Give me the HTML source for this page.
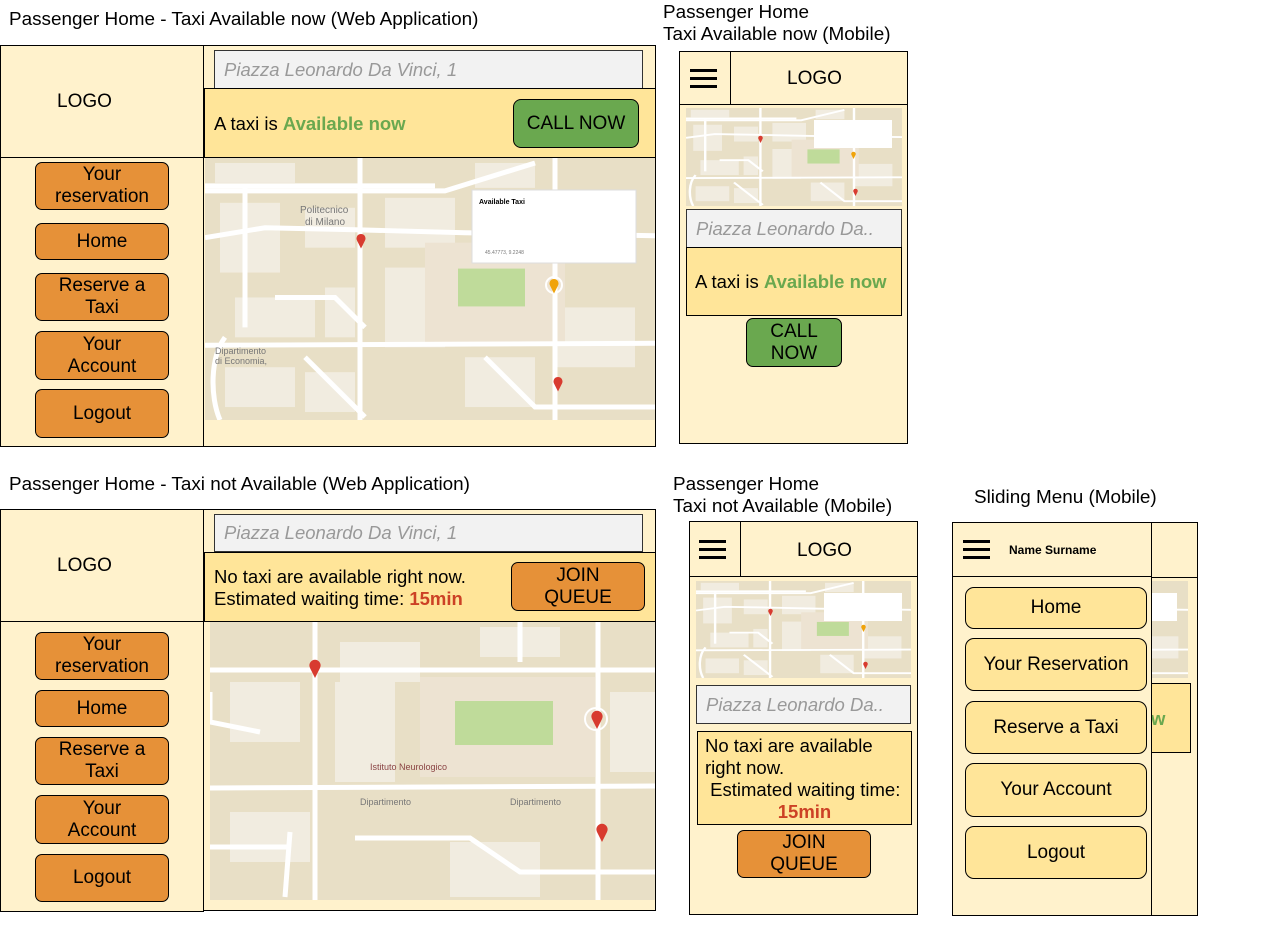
<!DOCTYPE html>
<html><head><meta charset="utf-8"><style>
*{box-sizing:border-box;margin:0;padding:0}
body{width:1272px;height:931px;background:#fff;position:relative;font-family:"Liberation Sans",Arial,sans-serif;color:#000;overflow:hidden}
.a{position:absolute}
.t{font-size:18.9px;line-height:22px;white-space:nowrap}
.bx{position:absolute;border:1px solid #000;background:#fff2cc}
.srch{position:absolute;background:#f2f2f2;border:1px solid #333;color:#999;font-style:italic;font-size:18.5px;padding-left:9px;display:flex;align-items:center}
.yel{position:absolute;background:#ffe599;border:1px solid #000}
.btn{position:absolute;border:1px solid #000;border-radius:7px;background:#e69138;display:flex;align-items:center;justify-content:center;text-align:center;font-size:19px;line-height:22px}
.g{color:#6aa84f;font-weight:bold}
.r{color:#cc4125;font-weight:bold}
.mb{position:absolute;border:1px solid #000;border-radius:9px;background:#ffe599;display:flex;align-items:center;justify-content:center;font-size:19px}
.hb{position:absolute;width:27px;height:3px;background:#000}
svg.m{position:absolute;display:block}
</style></head><body>
<svg width="0" height="0" style="position:absolute">
<defs>
<symbol id="map1" viewBox="0 0 450 263" preserveAspectRatio="none">
<rect width="450" height="263" fill="#e8dfc6"/>
<g fill="#f1ece0"><rect x="15" y="45" width="60" height="70"/><rect x="100" y="50" width="50" height="40"/><rect x="180" y="40" width="70" height="50"/><rect x="30" y="140" width="80" height="40"/><rect x="120" y="130" width="30" height="50"/><rect x="180" y="110" width="60" height="80"/><rect x="260" y="200" width="70" height="50"/><rect x="350" y="150" width="80" height="60"/><rect x="20" y="210" width="70" height="40"/><rect x="100" y="215" width="50" height="40"/><rect x="10" y="5" width="80" height="20"/><rect x="270" y="5" width="60" height="25"/></g>
<rect x="220" y="85" width="140" height="100" fill="#ede3d2"/>
<rect x="253" y="111" width="67" height="38" fill="#bfdb9a"/>
<g stroke="#fff" stroke-width="5" fill="none">
<path d="M0 33 L240 33 L330 5"/><path d="M0 28 L230 28"/><path d="M155 0 L155 263"/><path d="M0 188 L450 186"/><path d="M350 0 L350 263"/><path d="M0 80 L60 70 L150 72 L260 75 L450 78"/><path d="M40 30 L40 170"/><path d="M20 180 C5 200 5 240 15 263"/><path d="M100 200 L160 260"/><path d="M280 200 L330 250 L450 250"/><path d="M70 140 L130 140 L160 170"/></g>
</symbol>
<symbol id="pin" viewBox="0 0 10 16"><path d="M5 16 L1 8 A4.5 4.5 0 1 1 9 8 Z" fill="#d83b2f"/></symbol>
<symbol id="pino" viewBox="0 0 10 16"><path d="M5 16 L1 8 A4.5 4.5 0 1 1 9 8 Z" fill="#f0a30a"/></symbol>
</defs></svg>

<div class="a t" style="left:9px;top:9px">Passenger Home - Taxi Available now (Web Application)</div>
<div class="a t" style="left:663px;top:2px">Passenger Home<br>Taxi Available now (Mobile)</div>
<div class="a t" style="left:9px;top:474px">Passenger Home - Taxi not Available (Web Application)</div>
<div class="a t" style="left:673px;top:474px">Passenger Home<br>Taxi not Available (Mobile)</div>
<div class="a t" style="left:974px;top:487px">Sliding Menu (Mobile)</div>

<!-- WEB 1 -->
<div class="bx" style="left:203px;top:45px;width:453px;height:402px"></div>
<div class="bx" style="left:0;top:45px;width:204px;height:113px"></div>
<div class="a" style="left:57px;top:91px;font-size:19px">LOGO</div>
<div class="bx" style="left:0;top:157px;width:204px;height:290px"></div>
<div class="srch" style="left:214px;top:50px;width:429px;height:39px">Piazza Leonardo Da Vinci, 1</div>
<div class="yel" style="left:204px;top:88px;width:452px;height:70px"></div>
<div class="a" style="left:214px;top:113px;font-size:18.5px">A taxi is <span class="g">Available now</span></div>
<div class="btn" style="left:513px;top:99px;width:126px;height:49px;background:#6aa84f;border-radius:8px">CALL NOW</div>
<svg class="m" style="left:205px;top:158px" width="450" height="262"><use href="#map1" width="450" height="262"/>
<rect x="267" y="32" width="164" height="73" fill="#fff" stroke="#ddd"/><text x="274" y="46" font-size="7" font-weight="bold" font-family="Liberation Sans">Available Taxi</text><text x="280" y="96" font-size="5" fill="#777" font-family="Liberation Sans">45.47773, 9.2248</text>
<use href="#pin" x="151" y="74" width="10" height="17"/><circle cx="349" cy="127" r="8" fill="none" stroke="#fff" stroke-width="2"/><use href="#pino" x="344" y="119" width="10" height="17"/><use href="#pin" x="348" y="217" width="10" height="17"/>
<text x="95" y="55" font-size="10" fill="#777" font-family="Liberation Sans">Politecnico</text><text x="100" y="67" font-size="10" fill="#777" font-family="Liberation Sans">di Milano</text>
<text x="10" y="196" font-size="9" fill="#777" font-family="Liberation Sans">Dipartimento</text><text x="10" y="206" font-size="9" fill="#777" font-family="Liberation Sans">di Economia,</text></svg>
<div class="btn" style="left:35px;top:162px;width:134px;height:48px">Your<br>reservation</div>
<div class="btn" style="left:35px;top:223px;width:134px;height:37px">Home</div>
<div class="btn" style="left:35px;top:273px;width:134px;height:48px">Reserve a<br>Taxi</div>
<div class="btn" style="left:35px;top:331px;width:134px;height:49px">Your<br>Account</div>
<div class="btn" style="left:35px;top:389px;width:134px;height:49px">Logout</div>

<!-- WEB 2 -->
<div class="bx" style="left:203px;top:509px;width:453px;height:402px"></div>
<div class="bx" style="left:0;top:509px;width:204px;height:113px"></div>
<div class="a" style="left:57px;top:555px;font-size:19px">LOGO</div>
<div class="bx" style="left:0;top:621px;width:204px;height:291px"></div>
<div class="srch" style="left:214px;top:514px;width:429px;height:38px">Piazza Leonardo Da Vinci, 1</div>
<div class="yel" style="left:204px;top:552px;width:452px;height:70px"></div>
<div class="a" style="left:214px;top:566px;font-size:18.5px;line-height:22px">No taxi are available right now.<br>Estimated waiting time: <span class="r">15min</span></div>
<div class="btn" style="left:511px;top:562px;width:134px;height:49px">JOIN<br>QUEUE</div>
<svg class="m" style="left:210px;top:622px" width="445" height="278">
<rect width="445" height="278" fill="#e8dfc6"/>
<g fill="#f1ece0"><rect x="20" y="60" width="70" height="60"/><rect x="130" y="20" width="80" height="40"/><rect x="125" y="60" width="60" height="100"/><rect x="400" y="70" width="45" height="80"/><rect x="20" y="190" width="80" height="50"/><rect x="240" y="220" width="90" height="55"/><rect x="270" y="5" width="80" height="30"/></g>
<rect x="210" y="55" width="175" height="100" fill="#ede3d2"/>
<rect x="245" y="79" width="98" height="44" fill="#bfdb9a"/>
<g stroke="#fff" stroke-width="5" fill="none"><path d="M105 0 L105 278"/><path d="M0 48 L445 48"/><path d="M0 166 L445 164"/><path d="M388 0 L388 278"/><path d="M0 70 L0 100 L50 110"/><path d="M80 210 L75 275"/><path d="M145 216 L260 216 L310 250 L445 250"/><path d="M310 0 L310 40"/><path d="M0 225 L80 225"/></g>
<circle cx="386" cy="97" r="11" fill="none" stroke="#fff" stroke-width="2"/>
<use href="#pin" x="98" y="36" width="14" height="20"/><use href="#pin" x="380" y="87" width="14" height="20"/><use href="#pin" x="385" y="200" width="14" height="20"/>
<text x="150" y="183" font-size="9" fill="#777" font-family="Liberation Sans">Dipartimento</text><text x="300" y="183" font-size="9" fill="#777" font-family="Liberation Sans">Dipartimento</text><text x="160" y="148" font-size="9" fill="#8a4444" font-family="Liberation Sans">Istituto Neurologico</text></svg>
<div class="btn" style="left:35px;top:632px;width:134px;height:48px">Your<br>reservation</div>
<div class="btn" style="left:35px;top:690px;width:134px;height:37px">Home</div>
<div class="btn" style="left:35px;top:737px;width:134px;height:48px">Reserve a<br>Taxi</div>
<div class="btn" style="left:35px;top:795px;width:134px;height:49px">Your<br>Account</div>
<div class="btn" style="left:35px;top:854px;width:134px;height:48px">Logout</div>

<!-- MOBILE 1 -->
<div class="bx" style="left:679px;top:51px;width:229px;height:393px"></div>
<div class="bx" style="left:730px;top:51px;width:178px;height:54px"></div>
<div class="a" style="left:679px;top:104px;width:229px;height:1px;background:#000"></div>
<div class="a" style="left:787px;top:68px;font-size:19px">LOGO</div>
<div class="hb" style="left:690px;top:69px"></div><div class="hb" style="left:690px;top:77px"></div><div class="hb" style="left:690px;top:85px"></div>
<svg class="m" style="left:686px;top:108px" width="216" height="98"><use href="#map1" width="216" height="98"/><rect x="128" y="12" width="78" height="28" fill="#fff"/><use href="#pin" x="72" y="27" width="5" height="8"/><use href="#pino" x="165" y="43" width="5" height="8"/><use href="#pin" x="167" y="80" width="5" height="8"/></svg>
<div class="srch" style="left:686px;top:209px;width:216px;height:39px">Piazza Leonardo Da..</div>
<div class="yel" style="left:686px;top:247px;width:216px;height:69px"></div>
<div class="a" style="left:695px;top:271px;font-size:18.5px">A taxi is <span class="g">Available now</span></div>
<div class="btn" style="left:746px;top:318px;width:96px;height:49px;background:#6aa84f">CALL<br>NOW</div>

<!-- MOBILE 2 -->
<div class="bx" style="left:689px;top:521px;width:229px;height:394px"></div>
<div class="bx" style="left:740px;top:521px;width:178px;height:56px"></div>
<div class="a" style="left:689px;top:576px;width:229px;height:1px;background:#000"></div>
<div class="a" style="left:797px;top:540px;font-size:19px">LOGO</div>
<div class="hb" style="left:699px;top:540px"></div><div class="hb" style="left:699px;top:548px"></div><div class="hb" style="left:699px;top:556px"></div>
<svg class="m" style="left:696px;top:581px" width="215" height="97"><use href="#map1" width="215" height="97"/><rect x="128" y="12" width="78" height="28" fill="#fff"/><use href="#pin" x="72" y="27" width="5" height="8"/><use href="#pino" x="165" y="43" width="5" height="8"/><use href="#pin" x="167" y="80" width="5" height="8"/></svg>
<div class="srch" style="left:696px;top:685px;width:215px;height:39px">Piazza Leonardo Da..</div>
<div class="yel" style="left:697px;top:731px;width:215px;height:94px"></div>
<div class="a" style="left:705px;top:735px;font-size:18.5px;line-height:22px">No taxi are available<br>right now.<br>&nbsp;Estimated waiting time:</div>
<div class="a r" style="left:697px;top:801px;width:215px;text-align:center;font-size:18.5px">15min</div>
<div class="btn" style="left:737px;top:830px;width:134px;height:48px">JOIN<br>QUEUE</div>

<!-- SLIDING -->
<div class="bx" style="left:952px;top:522px;width:246px;height:394px"></div>
<svg class="m" style="left:1151px;top:581px" width="37" height="97"><use href="#map1" x="-180" width="217" height="97"/><rect x="0" y="12" width="26" height="28" fill="#fff"/></svg>
<div class="yel" style="left:1151px;top:683px;width:40px;height:70px"></div>
<div class="a g" style="left:1151px;top:708px;font-size:18.5px">w</div>
<div class="a" style="left:1151px;top:577px;width:47px;height:1px;background:#000"></div>
<div class="bx" style="left:952px;top:522px;width:200px;height:394px"></div>
<div class="a" style="left:952px;top:576px;width:200px;height:1px;background:#000"></div>
<div class="hb" style="left:963px;top:540px"></div><div class="hb" style="left:963px;top:548px"></div><div class="hb" style="left:963px;top:556px"></div>
<div class="a" style="left:1009px;top:543px;font-size:12px;font-weight:bold">Name Surname</div>
<div class="mb" style="left:965px;top:587px;width:182px;height:42px">Home</div>
<div class="mb" style="left:965px;top:638px;width:182px;height:53px">Your Reservation</div>
<div class="mb" style="left:965px;top:701px;width:182px;height:53px">Reserve a Taxi</div>
<div class="mb" style="left:965px;top:763px;width:182px;height:54px">Your Account</div>
<div class="mb" style="left:965px;top:826px;width:182px;height:53px">Logout</div>
</body></html>
